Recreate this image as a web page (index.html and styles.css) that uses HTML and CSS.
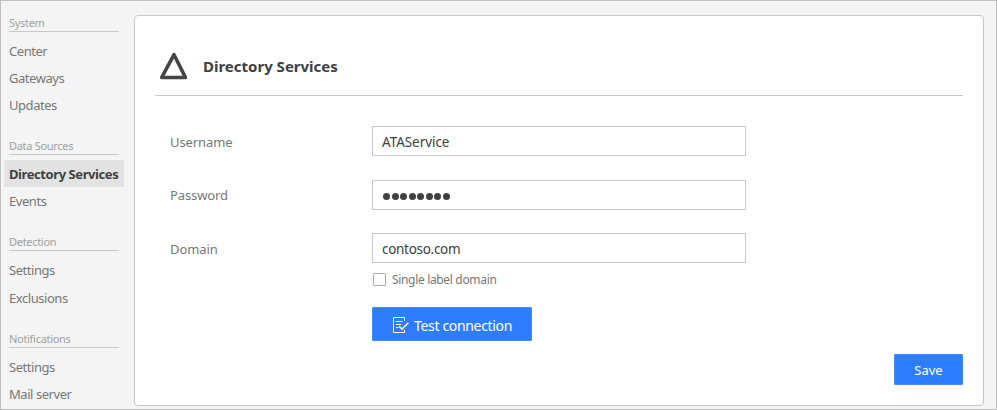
FILE: index.html
```html
<!DOCTYPE html>
<html lang="en">
<head>
<meta charset="utf-8">
<title>Directory Services</title>
<link rel="stylesheet" href="styles.css">
</head>
<body>
<div class="window">
  <nav class="sidebar">
    <section class="group">
      <h2>System</h2>
      <a class="item">Center</a>
      <a class="item">Gateways</a>
      <a class="item">Updates</a>
    </section>
    <section class="group">
      <h2>Data Sources</h2>
      <a class="item active">Directory Services</a>
      <a class="item">Events</a>
    </section>
    <section class="group">
      <h2>Detection</h2>
      <a class="item tall">Settings</a>
      <a class="item">Exclusions</a>
    </section>
    <section class="group">
      <h2>Notifications</h2>
      <a class="item">Settings</a>
      <a class="item">Mail server</a>
    </section>
  </nav>
  <main class="card">
    <header class="card-header">
      <svg class="logo" width="30" height="30" viewBox="0 0 30 30"><path d="M15 3.700 26.500 26.500H2.700Z" fill="none" stroke="#444" stroke-width="3.600" stroke-linejoin="round"/></svg>
      <h1>Directory Services</h1>
    </header>
    <div class="form">
      <div class="row"><label>Username</label><div class="field">ATAService</div></div>
      <div class="row"><label class="raised">Password</label><div class="field"><span class="dots"><i></i><i></i><i></i><i></i><i></i><i></i><i></i><i></i></span></div></div>
      <div class="row last"><label>Domain</label><div class="field">contoso.com</div></div>
      <div class="check"><span class="box"></span><span>Single label domain</span></div>
      <div class="button test">
        <svg width="18" height="18" viewBox="0 0 18 18" fill="none" stroke="#fff"><path d="M12.500 5V1.500H1.500v15h11V14M4 5.500h6.500M4 8.500h5M4 11.500h2.500"/><path d="M7.200 10.200l2.800 2.900 6.300-6.300" stroke-width="1.500"/></svg>
        <span>Test connection</span>
      </div>
    </div>
    <footer><div class="button save">Save</div></footer>
  </main>
</div>
</body>
</html>
```
FILE: styles.css
```css
* { box-sizing: border-box; }
body { margin: 0; font-family: "Noto Sans", "Open Sans", sans-serif; font-size: 13px; color: #777; }
h1, h2 { margin: 0; font-weight: 400; }
.window { display: flex; width: 997px; height: 410px; border: 1px solid #bfbfbf; background: #f4f4f4; overflow: hidden; }
.sidebar { width: 133px; padding: 14px 10px 0 3px; flex: none; }
.group { margin-bottom: 20px; }
.group h2 { height: 17px; line-height: 16px; margin: 0 5px 5px; border-bottom: 1px solid #c8c8c8; font-size: 11px; letter-spacing: -0.3px; color: #a0a0a0; white-space: nowrap; }
.item { display: block; height: 27px; line-height: 29px; padding-left: 5px; letter-spacing: -0.45px; white-space: nowrap; }
.item.tall { height: 28px; }
.item.active { background: #e2e2e2; color: #404040; font-weight: 700; letter-spacing: -0.42px; }
.card { display: flex; flex-direction: column; width: 850px; height: 391px; margin-top: 14px; padding: 0 20px; border: 1px solid #c8c8c8; border-radius: 4px; background: #fff; }
.card-header { display: flex; align-items: center; height: 80px; padding: 21px 0 0 4px; border-bottom: 1px solid #c8c8c8; }
.logo { margin-right: 14px; }
h1 { font-size: 15px; font-weight: 700; color: #404040; line-height: 20px; }
.form { padding: 30px 15px 0; }
.row { display: flex; height: 30px; margin-bottom: 24px; }
.row + .row.last { margin: -1px 0 0; }
.row label { width: 202px; line-height: 32px; letter-spacing: -0.1px; }
.row label.raised { line-height: 30px; }
.field { display: flex; align-items: center; width: 374px; padding: 2px 0 0 9px; border: 1px solid #c8c8c8; color: #404040; font-size: 13.5px; letter-spacing: -0.05px; }
.last .field { letter-spacing: -0.3px; }
.dots { display: flex; gap: 1.5px; padding-left: 1px; }
.dots i { width: 7px; height: 7px; border-radius: 50%; background: #404040; }
.check { display: flex; align-items: center; gap: 6px; height: 18px; margin: 7px 0 0 202px; padding-left: 1px; font-size: 12px; letter-spacing: -0.33px; }
.box { width: 13px; height: 13px; border: 1px solid #aaa; border-radius: 1px; }
.button { display: flex; align-items: center; background: #2f7dff; color: #fff; border: 1px solid #438aff; border-radius: 1px; }
.test { width: 160px; height: 34px; margin: 19px 0 0 202px; padding: 2px 0 0 19px; gap: 4px; font-size: 14px; letter-spacing: -0.33px; }
.save { width: 69px; height: 31px; padding-top: 1px; justify-content: center; }
footer { display: flex; justify-content: flex-end; margin-top: 13px; }
```
